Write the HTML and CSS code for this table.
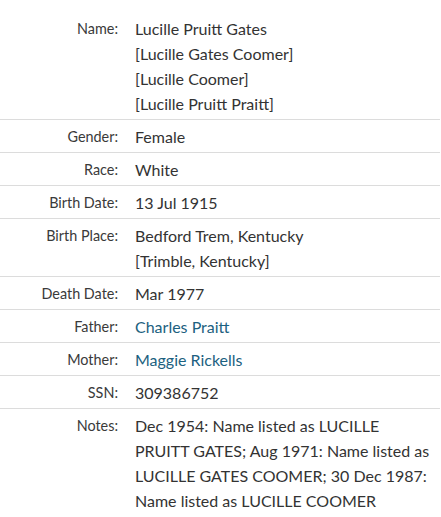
FILE: index.html
```html
<!DOCTYPE html>
<html>
<head>
<meta charset="utf-8">
<link rel="stylesheet" href="styles.css">
</head>
<body>
<div class="record">
  <div class="row">
    <div class="label">Name:</div>
    <div class="value">Lucille Pruitt Gates<br>[Lucille Gates Coomer]<br>[Lucille Coomer]<br>[Lucille Pruitt Praitt]</div>
  </div>
  <div class="row">
    <div class="label">Gender:</div>
    <div class="value">Female</div>
  </div>
  <div class="row">
    <div class="label">Race:</div>
    <div class="value">White</div>
  </div>
  <div class="row">
    <div class="label">Birth Date:</div>
    <div class="value">13 Jul 1915</div>
  </div>
  <div class="row">
    <div class="label">Birth Place:</div>
    <div class="value">Bedford Trem, Kentucky<br>[Trimble, Kentucky]</div>
  </div>
  <div class="row">
    <div class="label">Death Date:</div>
    <div class="value">Mar 1977</div>
  </div>
  <div class="row">
    <div class="label">Father:</div>
    <div class="value"><a class="link" href="#">Charles Praitt</a></div>
  </div>
  <div class="row">
    <div class="label">Mother:</div>
    <div class="value"><a class="link" href="#">Maggie Rickells</a></div>
  </div>
  <div class="row">
    <div class="label">SSN:</div>
    <div class="value">309386752</div>
  </div>
  <div class="row">
    <div class="label">Notes:</div>
    <div class="value">Dec 1954: Name listed as LUCILLE<br>PRUITT GATES; Aug 1971: Name listed as<br>LUCILLE GATES COOMER; 30 Dec 1987:<br>Name listed as LUCILLE COOMER</div>
  </div>
</div>
</body>
</html>
```
FILE: styles.css
```css
html, body {
  margin: 0;
  padding: 0;
  background: #ffffff;
}
body {
  font-family: Lato, "Noto Sans", sans-serif;
  color: #333333;
}
.record {
  width: 440px;
  display: flex;
  flex-direction: column;
  padding-top: 12px;
}
.row {
  display: grid;
  grid-template-columns: 118px 1fr;
  column-gap: 17px;
  padding: 4px 0 3px 0;
}
.row + .row {
  border-top: 1px solid #dcdcdc;
}
.label {
  text-align: right;
  font-size: 14.4px;
  line-height: 25px;
  color: #3a3a3a;
  white-space: nowrap;
}
.value {
  font-size: 16px;
  line-height: 25px;
  color: #333333;
  white-space: nowrap;
}
.link {
  color: #1c6180;
  text-decoration: none;
}
```
